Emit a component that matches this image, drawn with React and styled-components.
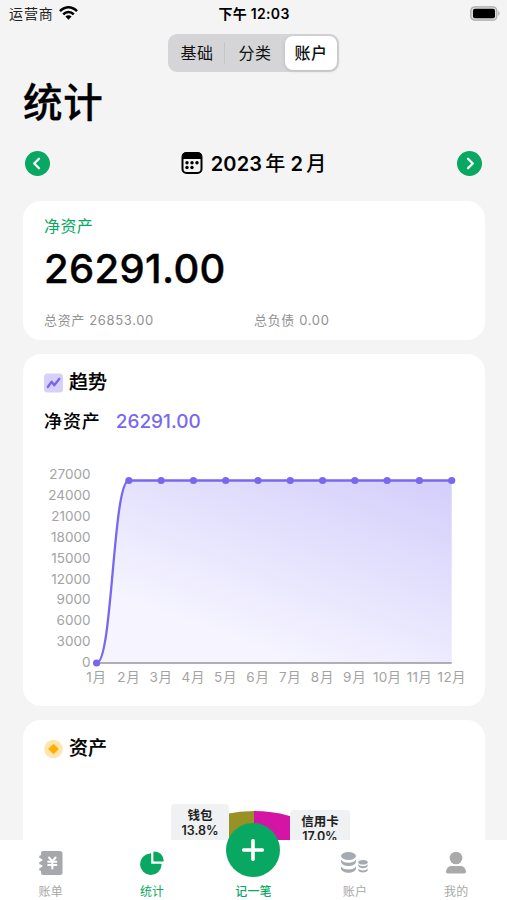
import React from "react";
import styled, { createGlobalStyle } from "styled-components";

const GREEN = "#08a862";
const PURPLE = "#7868ee";

const GlobalStyle = createGlobalStyle`
  * { box-sizing: border-box; }
  body {
    margin: 0;
    background: #f4f4f4;
    font-family: Inter, "Noto Sans CJK SC", sans-serif;
    color: #000;
  }
  svg { display: block; flex: none; }
`;

const Screen = styled.div`
  width: 507px;
  height: 900px;
  display: flex;
  flex-direction: column;
  overflow: hidden;
  background: #f4f4f4;
`;

const StatusBar = styled.header`
  height: 28px;
  flex: none;
  display: grid;
  grid-template-columns: 1fr auto 1fr;
  align-items: center;
  padding: 0 6px 0 9px;
`;

const Carrier = styled.div`
  display: flex;
  align-items: center;
  gap: 5px;
  height: 26px;
  align-self: start;
  font-size: 14px;
  letter-spacing: 0.9px;
  color: #222;
`;

const Clock = styled.div`
  height: 27px;
  line-height: 27px;
  align-self: start;
  margin-right: 2px;
  font-size: 14px;
  font-weight: 600;
  letter-spacing: 0.3px;
  white-space: pre;
`;

const BatterySlot = styled.div`
  display: flex;
  justify-content: flex-end;
  padding-bottom: 1px;
`;

const Content = styled.main`
  flex: 1;
  min-height: 0;
  overflow: hidden;
  padding: 6px 22px 0 23px;
  display: flex;
  flex-direction: column;
`;

const Segmented = styled.div`
  align-self: center;
  flex: none;
  width: 171px;
  height: 38px;
  margin-right: 1px;
  padding: 2px;
  border-radius: 9px;
  background: #d5d5d7;
  display: grid;
  grid-template-columns: 55px 1fr 52px;
`;

const Segment = styled.button`
  border: 0;
  padding: 0;
  margin: ${(p) => (p.$divided ? "6px 0" : "0")};
  border-right: ${(p) => (p.$divided ? "1px solid #c6c6c9" : "0")};
  border-radius: ${(p) => (p.$active ? "8px" : "0")};
  background: ${(p) => (p.$active ? "#fff" : "transparent")};
  box-shadow: ${(p) => (p.$active ? "0 1px 4px rgba(0,0,0,.13)" : "none")};
  font: ${(p) => (p.$active ? 500 : 400)} 16px/1 Inter, "Noto Sans CJK SC", sans-serif;
  letter-spacing: 0.4px;
  color: #111;
`;

const Title = styled.h1`
  flex: none;
  margin: 4px 0 0;
  height: 58px;
  font-size: 39.5px;
  line-height: 54px;
  letter-spacing: 0.8px;
  font-weight: 500;
  -webkit-text-stroke: 0.3px #000;
`;

const MonthRow = styled.div`
  flex: none;
  height: 58px;
  display: flex;
  align-items: center;
  justify-content: space-between;
  padding: 0 3px 0 2px;
`;

const RoundButton = styled.button`
  width: 25px;
  height: 25px;
  border: 0;
  padding: 0;
  border-radius: 50%;
  background: ${GREEN};
  display: grid;
  place-items: center;
`;

const Month = styled.div`
  display: flex;
  align-items: center;
  gap: 8px;
  font-size: 20px;
  font-weight: 600;
  letter-spacing: 0.2px;
`;

const MonthText = styled.div`
  display: flex;
  gap: 3px;
  line-height: 28px;
  padding-top: 1px;
`;

const Cjk = styled.span`
  font-weight: 500;
  margin-right: ${(p) => (p.$last ? 0 : 2)}px;
`;

const Card = styled.section`
  flex: none;
  height: ${(p) => p.$height}px;
  margin-top: ${(p) => p.$gap || 0}px;
  padding: 0 21px;
  border-radius: 18px;
  background: #fff;
`;

const NetLabel = styled.div`
  padding-top: 14px;
  line-height: 22px;
  font-size: 16px;
  letter-spacing: 0.4px;
  color: ${GREEN};
`;

const NetValue = styled.div`
  margin-top: 7px;
  height: 50px;
  line-height: 50px;
  font-size: 40px;
  font-weight: 500;
  letter-spacing: 0.35px;
  -webkit-text-stroke: 0.4px #000;
`;

const Totals = styled.div`
  display: grid;
  grid-template-columns: 210px 1fr;
  margin-top: 17px;
  font-size: 13px;
  line-height: 18px;
  letter-spacing: 0.65px;
  color: #929292;
`;

const CardTitle = styled.h2`
  margin: 0;
  padding-top: 14px;
  display: flex;
  align-items: center;
  gap: 6px;
  height: 43px;
  font-size: 19px;
  line-height: 28px;
  font-weight: 500;
  -webkit-text-stroke: 0.2px #000;
`;

const SeriesRow = styled.div`
  display: flex;
  gap: 15px;
  margin-top: 11px;
  height: 29px;
  line-height: 28px;
  font-size: 18px;
  letter-spacing: 0.9px;
  font-weight: 500;
`;

const SeriesValue = styled.span`
  color: ${PURPLE};
  font-size: 19px;
  letter-spacing: 0;
`;

const TrendSvg = styled.svg`
  width: 430px;
  height: 236px;
  margin-top: 13px;
  overflow: visible;
`;

const AxisText = styled.text`
  font-size: 13.5px;
  letter-spacing: ${(p) => p.$spacing || 0}px;
  fill: #a3a3a3;
`;

const Donut = styled.div`
  position: relative;
  margin: 48px -21px 0;
  height: 264px;
`;

const DonutSvg = styled.svg`
  width: 462px;
  height: 264px;
`;

const Callout = styled.div`
  position: absolute;
  left: ${(p) => p.$x}px;
  top: ${(p) => p.$y}px;
  width: ${(p) => p.$w}px;
  height: 45px;
  padding-top: 5px;
  border-radius: 4px;
  background: #f0f1f2;
  text-align: center;
  font-size: 12.5px;
  line-height: 14.5px;
  font-weight: 600;
  color: #222;
`;

const CalloutName = styled.div`
  font-weight: 700;
`;

const TabBar = styled.nav`
  position: relative;
  flex: none;
  height: 60px;
  display: grid;
  grid-template-columns: repeat(5, 1fr);
  grid-template-rows: 60px;
  background: #fff;
`;

const Tab = styled.div`
  min-height: 0;
  display: flex;
  flex-direction: column;
  align-items: center;
  justify-content: flex-end;
  font-size: 12px;
  line-height: 17px;
  letter-spacing: 0.2px;
  color: ${(p) => (p.$active ? GREEN : "#a8a8a8")};
  font-weight: ${(p) => (p.$strong ? 500 : 400)};
`;

const TabIcon = styled.div`
  height: 26px;
  margin-bottom: 7px;
  display: flex;
  align-items: center;
`;

const AddButton = styled.button`
  flex: none;
  width: 54px;
  height: 54px;
  margin-bottom: 6px;
  border: 0;
  padding: 0;
  border-radius: 50%;
  background: ${GREEN};
  display: grid;
  place-items: center;
`;

const Wifi = () => (
  <svg width="19" height="14" viewBox="0 0 19 14">
    <g fill="none" stroke="#000" strokeWidth="2.5">
      <path d="M1 5.2C6-.1 13-.1 18 5.2" />
      <path d="M4.2 8.4C7.3 5.1 11.7 5.1 14.8 8.4" />
    </g>
    <path d="M6.4 10.6C8.2 8.8 10.8 8.8 12.6 10.6L9.5 13.7Z" />
  </svg>
);

const Battery = () => (
  <svg width="31" height="15" viewBox="0 0 31 15">
    <rect x=".8" y=".8" width="26" height="13.4" rx="4" fill="#ddd" stroke="#aaa" strokeWidth="1.3" />
    <rect x="3" y="2.8" width="22" height="9.4" rx="2" />
    <path d="M28.3 4.8Q31 7.5 28.3 10.2Z" fill="#aaa" />
  </svg>
);

const Chevron = ({ right }) => (
  <svg width="25" height="25" viewBox="0 0 25 25">
    <path
      d={right ? "M11 7.7L15.8 12.5L11 17.3" : "M14 7.7L9.2 12.5L14 17.3"}
      fill="none"
      stroke="#fff"
      strokeWidth="2.3"
      strokeLinecap="round"
      strokeLinejoin="round"
    />
  </svg>
);

const Calendar = () => (
  <svg width="22" height="22" viewBox="0 0 22 22">
    <rect x="1.5" y="1" width="19" height="20" rx="4" fill="none" stroke="#000" strokeWidth="2" />
    <path d="M1 7V4.5Q1 .5 5 .5H17Q21 .5 21 4.5V7Z" />
    {[[6, 10.7], [11, 10.7], [16, 10.7], [6, 15.5], [11, 15.5]].map(([x, y]) => (
      <circle key={x + "-" + y} cx={x} cy={y} r="1.7" />
    ))}
  </svg>
);

const TrendIcon = () => (
  <svg width="19" height="20" viewBox="0 0 19 20">
    <rect y=".5" width="19" height="19" rx="3.5" fill="#d6d0fb" />
    <path d="M3.8 14L7.6 8.8L10.3 12.3L15.4 5.8" fill="none" stroke={PURPLE} strokeWidth="2.3" strokeLinecap="round" strokeLinejoin="round" />
  </svg>
);

const AssetIcon = () => (
  <svg width="19" height="20" viewBox="0 0 19 20">
    <circle cx="9.5" cy="10" r="9.3" fill="#ffe5ae" />
    <path d="M9.5 5.2L14.3 10L9.5 14.8L4.7 10Z" fill="#ffad00" stroke="#ffad00" strokeLinejoin="round" />
  </svg>
);

const LedgerIcon = () => (
  <svg width="24" height="24" viewBox="0 0 24 24">
    <path d="M4 0H21Q23.5 0 23.5 2.5V21.5Q23.5 24 21 24H4Q2 24 2 22V2Q2 0 4 0Z" fill="#a6a8ac" />
    <path d="M1.6 5.8H4M1.6 12H4M1.6 18.2H4" stroke="#a6a8ac" strokeWidth="3" strokeLinecap="round" />
    <path d="M1 9H2.6M1 15H2.6" stroke="#fff" strokeWidth="1.8" strokeLinecap="round" />
    <path d="M10 6.5L13.3 10.5L16.6 6.5M9.2 10.8H17.4M9.2 14H17.4M13.3 10.5V17.5" fill="none" stroke="#fff" strokeWidth="2" strokeLinecap="round" />
  </svg>
);

const PieIcon = () => (
  <svg width="24" height="24" viewBox="0 0 24 24" fill={GREEN}>
    <path d="M10 2.4Q11.2 2.2 11.2 3.4V12.8H20.6Q21.8 12.8 21.6 14A10.8 10.8 0 1 1 10 2.4Z" />
    <path d="M14.4.5Q22.7 1.2 23.7 9.5Q23.7 10.5 22.7 10.5H14.4Q13.4 10.5 13.4 9.5V1.5Q13.4.5 14.4.5Z" />
  </svg>
);

const CoinsIcon = () => (
  <svg width="27" height="24" viewBox="0 0 27 24" fill="#a6aab1">
    <ellipse cx="7.5" cy="5" rx="7.5" ry="4" />
    <path d="M0 8.5C2.2 12.8 12.8 12.8 15 8.5V11C13.5 16.4 1.5 16.4 0 11Z" />
    <path d="M0 15.2C2.2 19.5 12.8 19.5 15 15.2V17.7C13.5 23.1 1.5 23.1 0 17.7Z" />
    <ellipse cx="22" cy="11.2" rx="4.7" ry="2.3" />
    <path d="M17.3 13.2C19 15.8 25 15.8 26.7 13.2V15C25.5 18 18.5 18 17.3 15Z" />
    <path d="M17.3 17.5C19 20.1 25 20.1 26.7 17.5V19.3C25.5 22.3 18.5 22.3 17.3 19.3Z" />
  </svg>
);

const PersonIcon = () => (
  <svg width="22" height="24" viewBox="0 0 22 24" fill="#a9a9a9">
    <circle cx="11" cy="7" r="6.3" />
    <path d="M6.5 15H15.5Q20 15 21 20.5Q21.2 22.6 19.2 22.6H2.8Q.8 22.6 1 20.5Q2 15 6.5 15Z" />
  </svg>
);

const PlusIcon = () => (
  <svg width="22" height="22" viewBox="0 0 22 22">
    <path d="M11 1.7V20.3M1.7 11H20.3" stroke="#fff" strokeWidth="3.6" strokeLinecap="round" />
  </svg>
);

const MONTHS = Array.from({ length: 12 }, (_, i) => i + 1);
const TICKS = Array.from({ length: 10 }, (_, i) => i * 3000);
const monthX = (m) => 52.6 + (m - 1) * 32.28;

function TrendChart() {
  return (
    <TrendSvg viewBox="0 0 430 236">
      <defs>
        <linearGradient id="area" gradientUnits="userSpaceOnUse" x1="350" y1="10" x2="270" y2="225">
          <stop offset="0" stopColor="#d3cefb" />
          <stop offset="1" stopColor="#f6f5ff" />
        </linearGradient>
      </defs>
      <path d="M52.6 213C68.7 213 68.7 30.5 84.9 30.5H407.7V213Z" fill="url(#area)" />
      <path d="M52.6 213H407.7" stroke="#99959f" strokeWidth="1.3" />
      <path d="M52.6 213C68.7 213 68.7 30.5 84.9 30.5H407.7" fill="none" stroke={PURPLE} strokeWidth="2.3" />
      {MONTHS.map((m) => (
        <React.Fragment key={m}>
          <circle cx={monthX(m)} cy={m === 1 ? 213 : 30.5} r="3.6" fill={PURPLE} />
          <AxisText x={monthX(m)} y="231.5" textAnchor="middle" $spacing={m > 9 ? 0.3 : 0.8}>
            {m}月
          </AxisText>
        </React.Fragment>
      ))}
      {TICKS.map((t, i) => (
        <AxisText key={t} x="46.5" y={217 - i * 20.86} textAnchor="end">
          {t}
        </AxisText>
      ))}
    </TrendSvg>
  );
}

export default function App() {
  return (
    <>
      <GlobalStyle />
      <Screen>
        <StatusBar>
          <Carrier>运营商<Wifi /></Carrier>
          <Clock>下午 12:03</Clock>
          <BatterySlot><Battery /></BatterySlot>
        </StatusBar>
        <Content>
          <Segmented>
            <Segment $divided>基础</Segment>
            <Segment>分类</Segment>
            <Segment $active>账户</Segment>
          </Segmented>
          <Title>统计</Title>
          <MonthRow>
            <RoundButton aria-label="上个月"><Chevron /></RoundButton>
            <Month>
              <Calendar />
              <MonthText>2023<Cjk>年</Cjk>2<Cjk $last>月</Cjk></MonthText>
            </Month>
            <RoundButton aria-label="下个月"><Chevron right /></RoundButton>
          </MonthRow>
          <Card $height={139} $gap={9}>
            <NetLabel>净资产</NetLabel>
            <NetValue>26291.00</NetValue>
            <Totals>
              <span>总资产 26853.00</span>
              <span>总负债 0.00</span>
            </Totals>
          </Card>
          <Card $height={352} $gap={14}>
            <CardTitle><TrendIcon />趋势</CardTitle>
            <SeriesRow>净资产<SeriesValue>26291.00</SeriesValue></SeriesRow>
            <TrendChart />
          </Card>
          <Card $height={400} $gap={14}>
            <CardTitle><AssetIcon />资产</CardTitle>
            <Donut>
              <DonutSvg viewBox="0 0 462 264">
                <path d="M231 0A132 132 0 0 1 346.4 68L297 95A76 76 0 0 0 231 56Z" fill="#d314a5" />
                <path d="M231 0A132 132 0 0 0 131 46L173 83A76 76 0 0 1 231 56Z" fill="#979126" />
              </DonutSvg>
              <Callout $x={148} $y={-7} $w={58}>
                <CalloutName>钱包</CalloutName>13.8%
              </Callout>
              <Callout $x={267} $y={-1} $w={60}>
                <CalloutName>信用卡</CalloutName>17.0%
              </Callout>
            </Donut>
          </Card>
        </Content>
        <TabBar>
          <Tab><TabIcon><LedgerIcon /></TabIcon>账单</Tab>
          <Tab $active><TabIcon><PieIcon /></TabIcon>统计</Tab>
          <Tab $active $strong><AddButton aria-label="记一笔"><PlusIcon /></AddButton>记一笔</Tab>
          <Tab><TabIcon><CoinsIcon /></TabIcon>账户</Tab>
          <Tab><TabIcon><PersonIcon /></TabIcon>我的</Tab>
        </TabBar>
      </Screen>
    </>
  );
}
